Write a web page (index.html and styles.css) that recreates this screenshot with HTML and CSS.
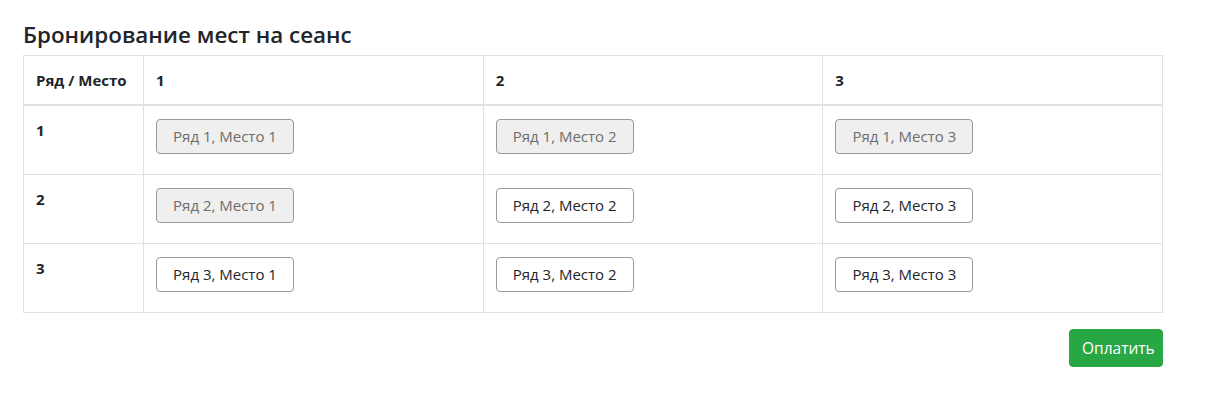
FILE: index.html
```html
<!DOCTYPE html>
<html lang="ru">
<head>
<meta charset="utf-8">
<title>Бронирование мест на сеанс</title>
<link rel="stylesheet" href="styles.css">
</head>
<body>
<div class="container">
  <h4 class="title">Бронирование мест на сеанс</h4>
  <table class="seats">
    <thead>
      <tr>
        <th class="col-row">Ряд / Место</th>
        <th>1</th>
        <th>2</th>
        <th>3</th>
      </tr>
    </thead>
    <tbody>
      <tr>
        <th>1</th>
        <td><button class="seat" disabled>Ряд 1, Место 1</button></td>
        <td><button class="seat" disabled>Ряд 1, Место 2</button></td>
        <td><button class="seat" disabled>Ряд 1, Место 3</button></td>
      </tr>
      <tr>
        <th>2</th>
        <td><button class="seat" disabled>Ряд 2, Место 1</button></td>
        <td><button class="seat">Ряд 2, Место 2</button></td>
        <td><button class="seat">Ряд 2, Место 3</button></td>
      </tr>
      <tr>
        <th>3</th>
        <td><button class="seat">Ряд 3, Место 1</button></td>
        <td><button class="seat">Ряд 3, Место 2</button></td>
        <td><button class="seat">Ряд 3, Место 3</button></td>
      </tr>
    </tbody>
  </table>
  <div class="actions">
    <button class="pay">Оплатить</button>
  </div>
</div>
</body>
</html>
```
FILE: styles.css
```css
* { box-sizing: border-box; }
html, body { margin: 0; }
body {
  font-family: "Open Sans", "Noto Sans", sans-serif;
  font-size: 16px;
  line-height: 1.5;
  color: #212529;
  background: #fff;
}
.container {
  width: 1140px;
  margin-left: 23px;
  padding-top: 17px;
}
.title {
  margin: 0 0 3px;
  font-size: 22.4px;
  font-weight: 600;
  line-height: 35px;
  color: #212529;
}
.seats {
  width: 1140px;
  border-collapse: collapse;
  margin-bottom: 16px;
  table-layout: fixed;
}
.seats th, .seats td {
  border: 1px solid #dee2e6;
  padding: 12px;
  text-align: left;
  vertical-align: top;
  line-height: 24px;
}
.seats thead th {
  border-bottom: 2px solid #dee2e6;
  padding-bottom: 12px;
  font-weight: 700;
  font-size: 15px;
}
.seats tbody th { font-weight: 700; font-size: 15px; }
.seats .col-row { width: 120px; }
.seat {
  display: block;
  margin: 1px 0 8px;
  padding: 6px 10px;
  font-family: inherit;
  font-size: 15px;
  line-height: 21px;
  height: 35px;
  width: 138px;
  color: #212529;
  background: #fff;
  border: 1px solid #999;
  border-radius: 4px;
  cursor: pointer;
  white-space: nowrap;
}
.seat:disabled {
  background: #efefef;
  color: #6d6d6d;
  cursor: default;
}
.actions {
  display: flex;
  justify-content: flex-end;
}
.pay {
  font-family: inherit;
  font-size: 15.5px;
  line-height: 24px;
  padding: 6px 12px;
  width: 94px;
  height: 38px;
  color: #fff;
  background: #28a745;
  border: 1px solid #28a745;
  border-radius: 4px;
}
```
